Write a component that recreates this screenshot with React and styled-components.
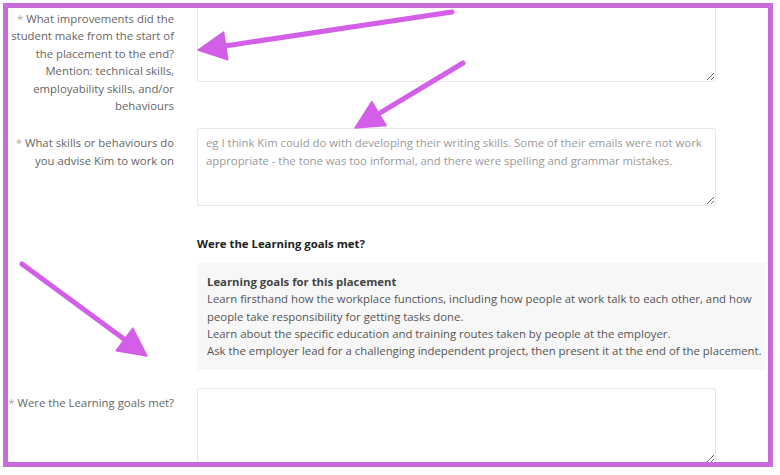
import React from 'react';
import styled, { createGlobalStyle } from 'styled-components';

const GlobalStyle = createGlobalStyle`
  html, body {
    margin: 0;
    padding: 0;
    background: #ffffff;
  }
  body {
    font-family: 'Open Sans', 'Liberation Sans', Arial, sans-serif;
    font-size: 11.35px;
    line-height: 17.4px;
    color: #666;
  }
`;

const Page = styled.div`
  position: relative;
  width: 780px;
  height: 475px;
  padding: 3px 7px 8px 3px;
  box-sizing: border-box;
`;

const Frame = styled.div`
  height: 100%;
  border: 5px solid #c76cd9;
  box-sizing: border-box;
  overflow: hidden;
  background: #fff;
`;

const Form = styled.div`
  margin-top: -4px;
  display: flex;
  flex-direction: column;
`;

const Row = styled.div`
  display: grid;
  grid-template-columns: 166px 519px;
  column-gap: 23px;
  align-items: start;
  margin-top: ${(p) => p.$gap || 0}px;
`;

const Label = styled.label`
  text-align: right;
  color: #666;
  padding-top: 6px;
  white-space: ${(p) => (p.$nowrap ? 'nowrap' : 'normal')};
`;

const Star = styled.span`
  color: #aaa;
`;

const Field = styled.textarea`
  display: block;
  width: 519px;
  height: ${(p) => p.$h || 78}px;
  box-sizing: border-box;
  border: 1px solid #e8e8e8;
  border-radius: 2px;
  padding: 5px 8px;
  font-family: inherit;
  font-size: 11.35px;
  line-height: 17.4px;
  color: #555;
  resize: vertical;
  background: #fff;
  &::placeholder {
    color: #9a9a9a;
  }
`;

const Section = styled.div`
  margin-left: 189px;
  margin-right: 2px;
  margin-top: 29px;
`;

const Heading = styled.div`
  font-weight: 700;
  color: #222;
`;

const GoalsBox = styled.div`
  margin-top: 10px;
  background: #f7f7f7;
  padding: 10px 2px 10px 10px;
  color: #555;
`;

const GoalsTitle = styled.div`
  font-weight: 700;
  color: #444;
`;

const Overlay = styled.svg`
  position: absolute;
  left: 0;
  top: 0;
  pointer-events: none;
`;

function Arrow({ from, to }) {
  const dx = to[0] - from[0];
  const dy = to[1] - from[1];
  const len = Math.hypot(dx, dy);
  const ux = dx / len;
  const uy = dy / len;
  const headLen = 28;
  const half = 14;
  const bx = to[0] - ux * headLen;
  const by = to[1] - uy * headLen;
  const pts = [
    [to[0], to[1]],
    [bx - uy * half, by + ux * half],
    [bx + uy * half, by - ux * half],
  ]
    .map((p) => p.join(','))
    .join(' ');
  return (
    <g fill="#d35ee7" stroke="#d35ee7">
      <line
        x1={from[0]}
        y1={from[1]}
        x2={bx + ux * 4}
        y2={by + uy * 4}
        strokeWidth="5"
        strokeLinecap="round"
      />
      <polygon points={pts} strokeWidth="1.5" strokeLinejoin="round" />
    </g>
  );
}

export default function App() {
  return (
    <>
      <GlobalStyle />
      <Page>
        <Frame>
          <Form>
            <Row>
              <Label>
                <Star>* </Star>What improvements did the student make from the start of the placement to the end? Mention: technical skills, employability skills, and/or behaviours
              </Label>
              <Field />
            </Row>
            <Row $gap={14}>
              <Label>
                <Star>* </Star>What skills or behaviours do you advise Kim to work on
              </Label>
              <Field placeholder="eg I think Kim could do with developing their writing skills. Some of their emails were not work appropriate - the tone was too informal, and there were spelling and grammar mistakes." />
            </Row>
            <Section>
              <Heading>Were the Learning goals met?</Heading>
              <GoalsBox>
                <GoalsTitle>Learning goals for this placement</GoalsTitle>
                <div>
                  Learn firsthand how the workplace functions, including how people at work talk to each other, and how people take responsibility for getting tasks done.
                </div>
                <div>Learn about the specific education and training routes taken by people at the employer.</div>
                <div>Ask the employer lead for a challenging independent project, then present it at the end of the placement.</div>
              </GoalsBox>
            </Section>
            <Row $gap={18}>
              <Label $nowrap>
                <Star>* </Star>Were the Learning goals met?
              </Label>
              <Field $h={76} />
            </Row>
          </Form>
        </Frame>
        <Overlay width="780" height="475" viewBox="0 0 780 475">
          <Arrow from={[452, 12]} to={[198, 50]} />
          <Arrow from={[463, 63]} to={[355, 128]} />
          <Arrow from={[22, 264]} to={[147, 356]} />
        </Overlay>
      </Page>
    </>
  );
}
